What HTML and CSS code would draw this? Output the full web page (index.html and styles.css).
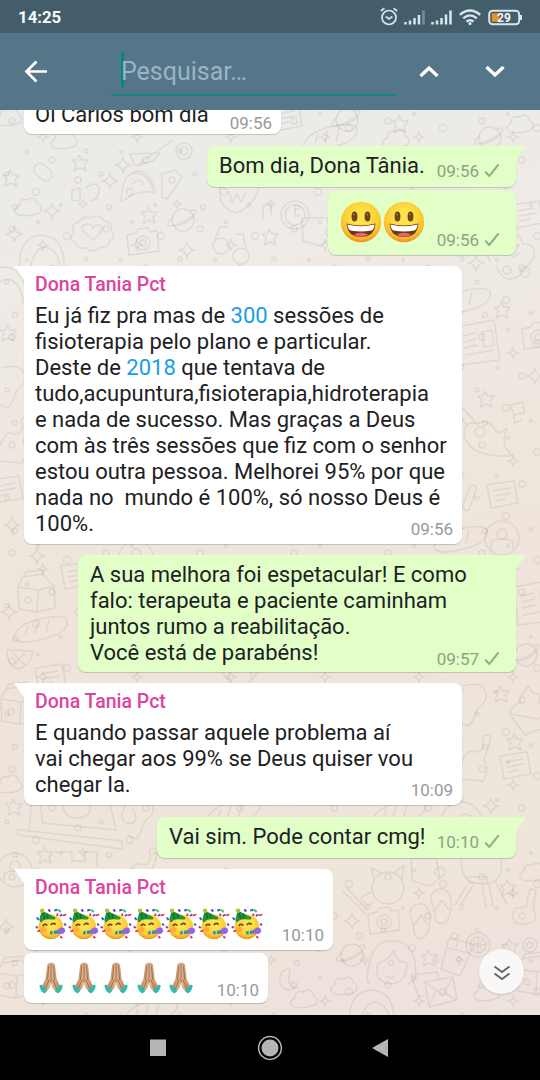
FILE: index.html
```html
<!DOCTYPE html>
<html lang="pt-BR">
<head>
<meta charset="utf-8">
<title>Pesquisar</title>
<link rel="stylesheet" href="styles.css">
</head>
<body>
<svg class="sprites" width="0" height="0" aria-hidden="true">
  <defs>
    <radialGradient id="skin" cx=".5" cy=".38" r=".65"><stop offset=".3" stop-color="#ffe24b"/><stop offset=".75" stop-color="#fdc52b"/><stop offset="1" stop-color="#ee8320"/></radialGradient>
    <linearGradient id="hand" x1="0" x2="1"><stop offset="0" stop-color="#b98962"/><stop offset=".5" stop-color="#dfb791"/><stop offset="1" stop-color="#b98760"/></linearGradient>
    <symbol id="tick" viewBox="0 0 16 15"><path d="M1.2 8.6 5.3 13 14.6 1.4" fill="none" stroke="#8fad84" stroke-width="2"/></symbol>
    <symbol id="grin" viewBox="0 0 42 42">
      <circle cx="21" cy="21" r="20.2" fill="url(#skin)"/>
      <ellipse cx="14.5" cy="15.5" rx="2.9" ry="5" fill="#6b4318"/><ellipse cx="27.5" cy="15.5" rx="2.9" ry="5" fill="#6b4318"/>
      <circle cx="14" cy="13.5" r="1" fill="#a57a3c"/><circle cx="27" cy="13.5" r="1" fill="#a57a3c"/>
      <path d="M6.500 22.500Q21 26.500 35.500 22.500Q34.500 36 21 36Q7.500 36 6.500 22.500Z" fill="#663b17"/>
      <path d="M7.300 23.400Q21 27 34.700 23.400Q34 28.500 31.500 29.500Q21 31.500 10.500 29.500Q8 28.500 7.300 23.400Z" fill="#fff"/>
      <path d="M13.500 33.800Q21 29.500 28.500 33.800Q21 37.600 13.500 33.800Z" fill="#f2607a"/>
    </symbol>
    <symbol id="party" viewBox="0 0 32 32">
      <circle cx="15.500" cy="18.800" r="12.300" fill="url(#skin)"/>
      <path d="M4.500 9.500 6.500 2.500 20 9.300Q21 12 17 11.500Q9 10 5.500 14.500Q3.500 13.500 4.500 9.500Z" fill="#23943c"/>
      <path d="m7.500 4.500 2 6M12 6l.5 4.500" stroke="#116b30" stroke-width="1.500"/>
      <circle cx="6.800" cy="2.800" r="2.200" fill="#9ac93a"/>
      <path d="M7.500 18q2-3 4.500-.5M15.500 17q2.500-3 4.800-.4" fill="none" stroke="#6c451c" stroke-width="1.600"/>
      <circle cx="8.500" cy="21.500" r="2.800" fill="#ff9a3d" opacity=".65"/>
      <path d="m14.500 23.500 9-1.500v3.500l-8.500 1z" fill="#2f91ad"/><path d="m18 23 0 3" stroke="#c7e25d" stroke-width="1.300"/>
      <path d="M22.500 21.500l3-2 3.500.5 1 3.500-2.500 2.500-4.500-.5z" fill="#9464e8"/>
      <path d="m1.500 9.500 1.800 2.500M19 2.500l3-.8" stroke="#2664d2" stroke-width="2"/>
      <path d="m13 1.500 2 2M24.500 8l2.500-1.500M29 15.500l1.500 2" stroke="#6940be" stroke-width="2"/>
      <path d="m22.500 1.500 3 2.500" stroke="#4fc553" stroke-width="2"/>
      <path d="m27.500 7.500 3.500-1M2 23.500l3-1M22 5.500l0 2.500M25 28.500l2 1.500" stroke="#e3264d" stroke-width="1.800"/>
      <path d="m.5 18.500 2 1.500" stroke="#7a49c7" stroke-width="2"/>
    </symbol>
    <symbol id="pray" viewBox="0 0 32 32">
      <g transform="translate(3.300 0) scale(.79 1)">
        <path d="M15.800 1.200Q14.500 0 12.800 1.200L11 2.500 8.600 17.500 4.200 24.500 9.500 29.500Q15.300 26.500 15.800 20Q16.300 26.500 22 29.500L27.400 24.500 23 17.500 20.700 2.500 18.900 1.200Q17.200 0 15.800 1.200Z" fill="url(#hand)"/>
        <path d="M15.800 1.500v19M12.800 3.500l-1.500 14.500M18.800 3.500l1.500 14.500M13.500 17.500 8.500 27M18 17.500l5 9.500" fill="none" stroke="#99643f" stroke-width=".9"/>
        <path d="m3.500 22.500 7.500 6.500-3.500 2.500q-5.500-2-6.500-8zM28.100 22.500l-7.500 6.500 3.500 2.500q5.500-2 6.500-8z" fill="#2abfae"/>
      </g>
    </symbol>
    <pattern id="specks" width="94" height="108" patternUnits="userSpaceOnUse">
      <circle cx="12" cy="13" r="3"/><circle cx="38" cy="6" r="1.500"/><circle cx="67" cy="20" r="3.500"/><circle cx="86" cy="43" r="2"/>
      <circle cx="27" cy="44" r="1.500"/><circle cx="52" cy="52" r="3"/><circle cx="7" cy="66" r="2"/><circle cx="78" cy="72" r="3"/>
      <circle cx="36" cy="84" r="3.500"/><circle cx="61" cy="97" r="1.500"/><circle cx="15" cy="99" r="2.500"/>
      <path d="M43 23q0 6 6 6-6 0-6 6 0-6-6-6 6 0 6-6M83 91q0 5 5 5-5 0-5 5 0-5-5-5 5 0 5-5"/>
    </pattern>
    <g id="star"><path d="M-1-8 2-3 8-3 4 2 6 8 0 5-6 8-4 1-8-3-3-3Z"/></g>
    <g id="spark"><path d="M0-8Q1-1 8 0 1 1 0 8-1 1-8 0-1-1 0-8Z"/></g>
    <g id="cloud"><path d="M-11 7q-7-5 1-9 0-8 8-6 8-5 10 3 7 5 2 10Q0 9-11 7Z"/></g>
    <g id="planet"><circle r="11"/><path d="M-10-3q-9 9-3 9 11-1 25-12 3-6-5-3M-8 6Q4 4 11-4"/></g>
    <g id="camera"><path d="M-16-8-7-10-5-14 5-15 7-11 14-12 16 8-14 12Z"/><circle r="7"/><circle r="3"/></g>
    <g id="letter"><path d="M-15-10 12-14 16 8-11 13ZM-9-4 8-7M-8 1 9-2M-7 6 3 4"/></g>
    <g id="person"><circle r="17"/><circle cy="-4" r="5"/><path d="M-11 12V5q0-4 11-4t11 4v7"/></g>
    <g id="helmet"><path d="M-22 18q-3-35 22-36 24 2 22 36M-12 18Q-9-5 3-6q14 2 16 24"/></g>
    <g id="flower"><path d="M-18 11q-7-5-1-10-4-9 5-11 4-7 12-4 9-5 13 3 9 1 7 9 6 6-1 11-2 8-10 6-8 7-14 1-9 1-11-5Z"/><path d="M0 8Q-19-7-5-8q4 0 5 4 5-7 9 0 0 5-9 12Z"/></g>
    <g id="guitar"><path d="M-18-25-7-13M-24-19-13-7M-22-26-15-21-3-8Q8-14 15-3 17 4 27-4q-8 18 6 28Q0 25-10 14-20 2-13-7-9-11-3-8"/><circle r="5"/></g>
    <g id="bear"><circle r="16"/><path d="m-14-9-3-11 11 5M6-15l10-8-2 15M-16 4q-15 5-9 10t12 0"/></g>
    <g id="pot"><path d="M-16-14h25l4 20-10 8-18-5Z"/><circle cx="13" cy="0" r="5"/></g>
    <g id="grill"><path d="M-20-20Q-25 12 0 12T18-17M-15 13l-12 20M-9 13l-12 20M0 13l4 23M7 12l4 23M13 9l12 23M-15 5H5v6h-18z"/></g>
    <g id="sandal"><path d="M-3-17q9-4 13 6Q13 2 8 12 2 20-4 14-5 8-7-2-13-12-3-17M2-7-6 5M2-7l7 10"/></g>
    <g id="girl"><path d="M-23 22q-4-5 1-22 4-23 25-21 18 2 20 22l1 16-8 5M-14 1q-5 20 14 21Q15 20 15 1 3 0 2-12-3-1-14 1"/><path d="M-5 14q4 4 9-1M-7 5h1M6 4h1"/></g>
    <g id="juice"><path d="M-8-18 17-12 3 20-16 13ZM-9-8 12-3M-1-8 2-22"/><circle cx="2" cy="3" r="2"/></g>
    <g id="orange"><circle r="12"/><circle r="8"/><path d="M-8 0H8M0-8V8M-5-5 5 5M5-5-5 5"/></g>
    <g id="envelope"><path d="M-15-10 13-15 17 8-11 15ZM-15-10 3 3 13-15M-11 15-4-2M17 8 3 0M-16 4-22 4-29-17-3-20-1-14"/></g>
    <g id="carton"><path d="M-18-8-13-18 6-21 18-9 19 13 0 17-17 14ZM-18-8 2-5 1 17M2-5 18-9M-13-18-10-23 8-25 6-21"/><circle cx="-8" cy="5" r="3"/></g>
    <g id="bread"><path d="M-26 6Q-20-8 5-12q19-4 22 2 2 11-17 17-26 8-34 3-3-1-2-4M-12-4-15 5M-2-8-5 4M9-10 6 3"/></g>
    <g id="cup"><path d="M-18 0Q-15-8-8-9-7-21 1-26q2 8 9 8 4 4 0 9 12 0 10 9l-10 7-28-5ZM-17 4-3 23 18 15"/></g>
    <g id="cat"><path d="M-12-30Q8-36 11-22 13-15 3-8-1 3-5 9-9 11-14 6M-14 48Q-8 31 0 36q12-1 7-15 5-4 9 0Q13 35 9 43q6 10-1 22l-22-2"/></g>
    <g id="desk"><path d="M-40-26-43 8 50 18 50 26-54 12-54 6-43 8M-33-25-29 0 44 7 37-24M-9-20q0 16 15 15T18-22M-17 29h17v9h13v-9h12v14M55-20q-11 18 1 20t5-14"/></g>
    <g id="news"><path d="M-24-18 14-25 20 15-20 20ZM2-13 12-15 14 0 4 2ZM-18-9-4-12M-17-3-3-6M-16 3-2 0M-15 10 14 5"/></g>
    <g id="cupcake"><path d="M-21 0q-8-9 3-12 0-15 14-13Q7-32 11-18q15 0 10 15l-9 11M-16 4q6 14 14 13Q8 16 12 7M-10-8l5-4M0-4l7-5M3-14l5-3"/><circle cx="-5" cy="8" r="4"/><circle cx="13" cy="10" r="5"/></g>
    <g id="fish"><path d="M-19 20q1-29 14-29Q9-9 14 11 0 6-19 20M-9-8Q5-19 16 9M-8 2Q0-6 4 3"/></g>
    <g id="plane"><path d="M-22-3 8-4 1 4-17 9ZM-16 9 21-17M10 17 23 13 30 20 15 42 10 40Z"/></g>
  </defs>
</svg>

<div class="screen">
  <header class="status">
    <span class="clock">14:25</span>
    <svg class="status-icons" width="146" height="22" viewBox="0 0 146 22" fill="none" stroke="#d9e6ee">
      <circle cx="10" cy="11.500" r="7" stroke-width="1.700"/><path d="m6.800 10.500 3.200 2.500 3.400-2.500M1.800 5l3.600-2.700M18.200 5l-3.600-2.700" stroke-width="1.700"/>
      <g stroke-width="2.500"><path d="M26.500 18.500v-2.500M31 18.500v-4M35.500 18.500V12M40 18.500V9M53.500 18.500v-2.500M58 18.500v-4M62.500 18.500V12M67 18.500V8.500M71.500 18.500V4.500"/><path d="M44.500 18.500V4.500" opacity=".35"/></g>
      <path d="M80.800 8.800Q91 .2 101.200 8.800M84.200 12.400q6.800-6 13.600 0M87.400 15.700q3.600-3 7.200 0" stroke-width="2.300"/><circle cx="91" cy="17.600" r="1.600" fill="#d9e6ee" stroke="none"/>
      <rect x="110.200" y="4.800" width="30" height="13.400" rx="3.500" stroke-width="2"/><rect x="112.800" y="7.300" width="7.500" height="8.400" fill="#dc981f" stroke="none"/><path d="M142 9v5" stroke-width="2"/>
      <text class="battery-text" x="125" y="15.700" text-anchor="middle">29</text>
    </svg>
  </header>

  <nav class="searchbar">
    <svg class="back" width="26" height="26" viewBox="0 0 26 26"><path d="M24 12.500H4M13.500 2.500 3.500 12.500l10 10" fill="none" stroke="#fff" stroke-width="2.700"/></svg>
    <div class="field"><span class="caret"></span><span class="hint">Pesquisar…</span></div>
    <svg class="up" width="22" height="14" viewBox="0 0 22 14"><path d="m2.500 11 8.500-8 8.500 8" fill="none" stroke="#fff" stroke-width="3.400"/></svg>
    <svg class="down" width="22" height="14" viewBox="0 0 22 14"><path d="m2.500 2 8.500 8 8.500-8" fill="none" stroke="#fff" stroke-width="3.400"/></svg>
  </nav>

  <main class="chat">
    <svg class="wallpaper" width="540" height="905" viewBox="0 110 540 905" aria-hidden="true">
      <g class="specks"><rect y="110" width="540" height="905" fill="url(#specks)" stroke="none"/></g>
      <g class="doodles">
        <use href="#star" x="80" y="163"/><use href="#star" x="11" y="178"/><use href="#spark" x="123" y="165"/><use href="#spark" x="110" y="181"/>
        <rect x="33" y="166" width="20" height="12" rx="6" transform="rotate(42 43 172)"/><path d="M72 200v-10l8-2v13zM86 188q9-8 13 0 1 9-8 13l8-2"/>
        <use href="#cloud" x="29" y="208"/><use href="#spark" x="52" y="211"/><use href="#star" x="149" y="215"/><use href="#flower" x="93" y="232"/>
        <use href="#camera" x="143" y="243"/><use href="#planet" x="183" y="220"/><use href="#helmet" x="42" y="253"/><use href="#spark" x="14" y="234"/><use href="#spark" x="187" y="250"/>
        <use href="#fish" x="140" y="182"/><use href="#plane" x="152" y="157"/><circle cx="184" cy="151" r="8"/><circle cx="184" cy="151" r="4"/>
        <path d="M220 186q-3 22 17 27 19-9 22-26M229 192l3 10 5-8 4 8 5-10"/><circle cx="295" cy="215" r="14"/><circle cx="295" cy="215" r="10"/><path d="M295 208v8h6M263 206v13M263 206l8-2v11"/>
        <use href="#star" x="270" y="237"/><use href="#pot" x="318" y="232"/><circle cx="221" cy="246" r="8"/><circle cx="241" cy="256" r="8"/><path d="m215 240 5-13h8M246 249l-3-15h-8"/>
        <use href="#planet" x="347" y="120"/><use href="#star" x="400" y="124"/><use href="#cloud" x="397" y="140"/><use href="#cloud" x="521" y="125"/><use href="#planet" x="490" y="138"/><use href="#letter" x="286" y="118"/><use href="#bread" x="330" y="138"/>
        <use href="#cloud" x="10" y="118"/><use href="#cloud" x="65" y="141"/><use href="#letter" x="527" y="215"/><use href="#spark" x="476" y="263"/>
        <use href="#cupcake" x="512" y="262"/><use href="#bread" x="463" y="302"/><use href="#star" x="502" y="310"/><use href="#news" x="480" y="345"/><use href="#camera" x="538" y="337"/><use href="#spark" x="535" y="376"/><use href="#star" x="486" y="399"/>
        <path d="m510 405 13-3 1 11-10 2zM514 415v8l8-3"/><use href="#guitar" x="480" y="432"/><use href="#letter" x="502" y="495"/><rect x="466" y="485" width="7" height="26" rx="3" transform="rotate(20 470 498)"/><use href="#person" x="502" y="538"/><use href="#bread" x="460" y="540"/>
        <use href="#helmet" x="4" y="285"/><use href="#star" x="8" y="333"/><use href="#cat" x="14" y="398"/><use href="#letter" x="7" y="490"/><use href="#spark" x="12" y="525"/>
        <use href="#spark" x="37" y="556"/><use href="#person" x="136" y="558"/><use href="#carton" x="36" y="595"/><use href="#bread" x="40" y="630"/><use href="#letter" x="76" y="576"/><use href="#spark" x="9" y="612"/><path d="M7 650l26 1q-1 13-14 18Q7 667 7 650M12 652l14 14M25 653 13 666"/>
        <use href="#letter" x="50" y="678"/><use href="#carton" x="19" y="707"/><use href="#person" x="240" y="668"/><use href="#cloud" x="10" y="785"/><use href="#star" x="14" y="807"/><use href="#desk" x="72" y="823"/><use href="#star" x="45" y="855"/><use href="#person" x="15" y="870"/><use href="#cat" x="142" y="829"/>
        <use href="#news" x="538" y="605"/><use href="#planet" x="526" y="655"/><use href="#cat" x="475" y="716"/><use href="#star" x="501" y="694"/><use href="#cup" x="528" y="712"/><use href="#star" x="515" y="742"/><use href="#letter" x="515" y="766"/><use href="#spark" x="491" y="806"/><use href="#bread" x="398" y="814"/><use href="#helmet" x="462" y="820"/><use href="#bread" x="233" y="813"/>
        <use href="#bear" x="388" y="888"/><use href="#pot" x="427" y="872"/><use href="#grill" x="482" y="872"/><use href="#star" x="508" y="888"/><use href="#cloud" x="534" y="873"/><path d="m342 890 24 24M346 887l21 23"/>
        <use href="#camera" x="384" y="922"/><use href="#sandal" x="440" y="907"/><use href="#sandal" x="419" y="922"/><path d="M530 889l6 1-3 19q8 13-8 15-17 1-10-15l11-3Z"/><use href="#spark" x="352" y="921"/>
        <use href="#planet" x="352" y="955"/><use href="#girl" x="392" y="962"/><use href="#star" x="429" y="958"/><use href="#juice" x="457" y="956"/><use href="#orange" x="478" y="945"/><use href="#star" x="510" y="947"/><circle cx="530" cy="945" r="7"/><circle cx="530" cy="945" r="3"/><use href="#envelope" x="440" y="992"/><use href="#helmet" x="372" y="1008"/><use href="#cloud" x="345" y="987"/><use href="#cloud" x="488" y="993"/><use href="#carton" x="535" y="977"/>
        <path d="M291 969q-13 0-11 13 5 13 17 5-13-1-6-18M304 943q12 14 17-3"/><use href="#carton" x="15" y="981"/><use href="#spark" x="6" y="927"/><use href="#cloud" x="305" y="1000"/><use href="#bread" x="150" y="1013"/>
      </g>
    </svg>

    <article class="bubble in w-oi single"><p>Oi Carlos bom dia</p><span class="meta">09:56</span></article>
    <article class="bubble out tail w-bom single"><p>Bom dia, Dona Tânia.</p><span class="meta">09:56<svg class="tick"><use href="#tick"/></svg></span></article>
    <article class="bubble out w-grin joined"><div class="emoji big" role="img" aria-label="😃😃"><svg><use href="#grin"/></svg><svg><use href="#grin"/></svg></div><span class="meta">09:56<svg class="tick"><use href="#tick"/></svg></span></article>
    <article class="bubble in tail w-long"><h2>Dona Tania Pct</h2><p>Eu já fiz pra mas de <a>300</a> sessões de<br>fisioterapia pelo plano e particular.<br>Deste de <a>2018</a> que tentava de<br>tudo,acupuntura,fisioterapia,hidroterapia<br>e nada de sucesso. Mas graças a Deus<br>com às três sessões que fiz com o senhor<br>estou outra pessoa. Melhorei 95% por que<br>nada no&nbsp; mundo é 100%, só nosso Deus é<br>100%.</p><span class="meta">09:56</span></article>
    <article class="bubble out tail w-sua"><p>A sua melhora foi espetacular! E como<br>falo: terapeuta e paciente caminham<br>juntos rumo a reabilitação.<br>Você está de parabéns!</p><span class="meta">09:57<svg class="tick"><use href="#tick"/></svg></span></article>
    <article class="bubble in tail w-long"><h2>Dona Tania Pct</h2><p>E quando passar aquele problema aí<br>vai chegar aos 99% se Deus quiser vou<br>chegar la.</p><span class="meta">10:09</span></article>
    <article class="bubble out tail w-vai single"><p>Vai sim. Pode contar cmg!</p><span class="meta">10:10<svg class="tick"><use href="#tick"/></svg></span></article>
    <article class="bubble in tail w-party"><h2>Dona Tania Pct</h2><div class="emoji" role="img" aria-label="🥳🥳🥳🥳🥳🥳🥳"><svg><use href="#party"/></svg><svg><use href="#party"/></svg><svg><use href="#party"/></svg><svg><use href="#party"/></svg><svg><use href="#party"/></svg><svg><use href="#party"/></svg><svg><use href="#party"/></svg></div><span class="meta">10:10</span></article>
    <article class="bubble in w-pray joined"><div class="emoji" role="img" aria-label="🙏🏽🙏🏽🙏🏽🙏🏽🙏🏽"><svg><use href="#pray"/></svg><svg><use href="#pray"/></svg><svg><use href="#pray"/></svg><svg><use href="#pray"/></svg><svg><use href="#pray"/></svg></div><span class="meta">10:10</span></article>

    <div class="jump"><svg width="18" height="18" viewBox="0 0 18 18" fill="none" stroke="#666" stroke-width="2"><path d="m1.500 3.500 7.500 5.500 7.500-5.500M1.500 10.500 9 16l7.500-5.500"/></svg></div>
  </main>

  <footer class="system">
    <svg width="240" height="26" viewBox="150 0 240 26" fill="#b5b5b5"><rect x="150" y="4.500" width="16" height="16.500"/><circle cx="270" cy="13" r="8.500"/><circle cx="270" cy="13" r="11.400" fill="none" stroke="#b5b5b5" stroke-width="1.500"/><path d="M372 13 388 4v18z"/></svg>
  </footer>
</div>
</body>
</html>
```
FILE: styles.css
```css
* { box-sizing: border-box; }
body { margin: 0; font-family: Roboto, "Liberation Sans", sans-serif; }
h2, p { margin: 0; font-weight: 400; }
.sprites { position: absolute; }
.screen { width: 540px; height: 1080px; display: flex; flex-direction: column; overflow: hidden; }

.status { height: 33px; flex: none; background: #445d6b; display: flex; align-items: center; justify-content: space-between; padding: 0 15px 0 18px; }
.clock { color: #f5fafc; font-size: 16.800px; font-weight: 700; line-height: 20px; }
.battery-text { font: 700 12px Roboto, sans-serif; fill: #f0f5f8; stroke: none; }

.searchbar { height: 77px; flex: none; background: #557588; display: flex; align-items: center; padding-left: 23px; }
.field { width: 286px; height: 49px; margin: 0 21px 0 62px; padding-left: 10px; border-bottom: 2px solid #16887b; display: flex; align-items: center; }
.caret { width: 3px; height: 35px; background: #078777; margin-top: -2px; }
.hint { color: #9bb4c5; font-size: 25px; line-height: 36px; margin: 2px 0 0 -3px; }
.down { margin-left: 44px; }

.chat { position: relative; flex: 1; overflow: hidden; display: flex; flex-direction: column; align-items: flex-start; padding: 0 24px; background: linear-gradient(170deg, #e9ebe7 0%, #efebe7 17%, #efe6de 40%, #eee4dc 58%, #eee5db 82%, #eee2dd 100%); }
.wallpaper { position: absolute; inset: 0; }
.wallpaper .doodles { fill: none; stroke: #a09488; stroke-opacity: .19; stroke-width: 1.5; stroke-linejoin: round; }
#specks { fill: none; stroke: #a09488; stroke-opacity: .19; stroke-width: 1.4; }

.bubble { position: relative; flex: none; display: grid; padding: 7px 9px 7px 11px; margin-top: 11px; border-radius: 8px; color: #1d2123; box-shadow: 0 1px 1px rgba(0, 0, 0, .18); }
.bubble p { grid-area: 2 / 1; font-size: 22px; line-height: 26px; white-space: nowrap; }
.bubble h2 { grid-area: 1 / 1; color: #dc459f; font-size: 19.500px; font-weight: 500; line-height: 26px; margin: -1px 0 5px; }
.bubble a { color: #169ee6; }
.meta { grid-area: 2 / 1; place-self: end; display: flex; align-items: center; font-size: 17px; line-height: 20px; color: #999; margin-bottom: -2px; }
.in { background: #fff; }
.out { background: #e1ffc7; align-self: flex-end; padding-left: 12px; padding-right: 16px; }
.out .meta { color: #8ca480; }
.tick { width: 16px; height: 15px; margin: -1px 0 0 5px; }
.single { padding-bottom: 8px; }
.joined { margin-top: 3px; }
.tail::before { content: ""; position: absolute; top: 0; width: 18px; height: 14px; }
.in.tail::before { left: -10px; background: #fff; clip-path: polygon(0 0, 100% 0, 100% 100%, 10px 100%); }
.out.tail::before { right: -10px; background: #e1ffc7; clip-path: polygon(0 0, 100% 0, 8px 100%, 0 100%); }

.w-oi { width: 257px; margin-top: -17px; padding: 9px 9px 6px 11px; }
.w-oi .meta { margin-bottom: -5px; }
.w-bom { width: 309px; margin-top: 12px; }
.w-grin { width: 188px; height: 65px; }
.w-long { width: 438px; }
.w-sua { width: 438px; height: 117px; }
.w-vai { width: 359px; margin-top: 12px; }
.w-party { width: 309px; }
.w-pray { width: 244px; height: 50px; }
.w-sua .meta { margin-bottom: -3px; }
.w-pray .meta { margin-bottom: -4px; }

.emoji { grid-area: 2 / 1; display: flex; height: 37px; padding-top: 2px; }
.emoji svg { width: 32.600px; height: 32px; }
.w-pray .emoji { height: 36px; }
.big.emoji { height: 51px; padding-top: 4px; gap: 1px; }
.big.emoji svg { width: 42px; height: 42px; }

.jump { position: absolute; right: 16px; bottom: 21px; width: 45px; height: 45px; border-radius: 50%; background: #faf8f6; display: grid; place-items: center; box-shadow: 0 1px 2px rgba(0, 0, 0, .15); }
.system { height: 65px; flex: none; background: #000; display: flex; align-items: center; justify-content: center; }
```
